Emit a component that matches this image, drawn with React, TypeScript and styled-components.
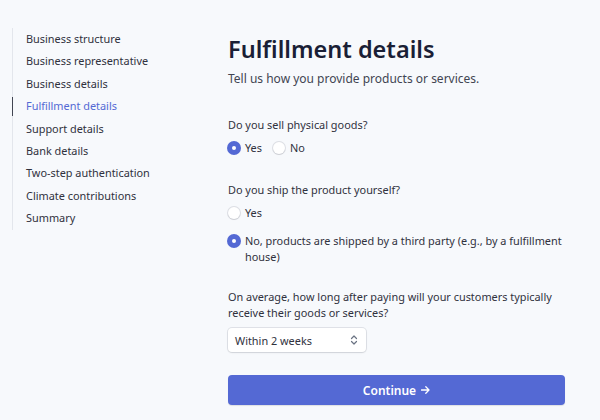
import React, { useState } from 'react'
import styled, { createGlobalStyle } from 'styled-components'

const GlobalStyle = createGlobalStyle`
  html, body {
    margin: 0;
    padding: 0;
    background: #f7f9fc;
  }
  body {
    font-family: "Noto Sans", "Open Sans", sans-serif;
    color: #30313d;
  }
`

const Page = styled.div`
  display: flex;
  width: 600px;
  height: 420px;
  overflow: hidden;
  background: #f7f9fc;
`

const SideNav = styled.nav`
  width: 228px;
  padding: 28px 0 0 12px;
  box-sizing: border-box;
`

const NavList = styled.ul`
  list-style: none;
  margin: 0;
  padding: 0;
  border-left: 1px solid #e3e6ec;
  width: 180px;
`

const NavItem = styled.li<{ $active?: boolean }>`
  position: relative;
  padding-left: 13px;
  height: 22.4px;
  line-height: 22.4px;
  font-size: 10.9px;
  color: ${(p) => (p.$active ? '#5469d4' : '#30313d')};

  &::before {
    content: '';
    display: ${(p) => (p.$active ? 'block' : 'none')};
    position: absolute;
    left: -1px;
    top: 2px;
    bottom: 2px;
    width: 1px;
    background: #414552;
  }
`

const Main = styled.main`
  width: 337px;
  padding-top: 32px;
`

const Title = styled.h1`
  margin: 0;
  font-size: 23.5px;
  font-weight: 600;
  color: #1a1f36;
  line-height: 34px;
`

const Subtitle = styled.p`
  margin: 4px 0 0;
  font-size: 12px;
  color: #414552;
  line-height: 18px;
`

const Question = styled.fieldset<{ $gap: number }>`
  border: 0;
  margin: 0;
  padding: 0;
  margin-top: ${(p) => p.$gap}px;
`

const Label = styled.div`
  font-size: 10.9px;
  line-height: 16px;
  color: #30313d;
`

const RadioRow = styled.div<{ $stack?: boolean }>`
  display: flex;
  flex-direction: ${(p) => (p.$stack ? 'column' : 'row')};
  gap: ${(p) => (p.$stack ? '12px' : '11px')};
  margin-top: 7px;
`

const RadioLabel = styled.label`
  display: flex;
  align-items: flex-start;
  gap: 5px;
  font-size: 10.9px;
  line-height: 16px;
  color: #30313d;
  cursor: pointer;
`

const Dot = styled.span<{ $on: boolean }>`
  flex: none;
  width: 12px;
  height: 12px;
  margin-top: 2px;
  border-radius: 50%;
  box-sizing: border-box;
  background: ${(p) => (p.$on ? '#5469d4' : '#ffffff')};
  box-shadow: ${(p) =>
    p.$on
      ? '0 0 0 1px #5469d4'
      : '0 0 0 1px rgba(60, 66, 87, 0.14), 0 1px 1px rgba(0, 0, 0, 0.08)'};
  display: flex;
  align-items: center;
  justify-content: center;

  &::after {
    content: '';
    width: 4px;
    height: 4px;
    border-radius: 50%;
    background: #ffffff;
    display: ${(p) => (p.$on ? 'block' : 'none')};
  }
`

const SelectBox = styled.div`
  margin-top: 7px;
  width: 138px;
  height: 24px;
  box-sizing: border-box;
  padding: 0 8px 0 7px;
  display: flex;
  align-items: center;
  justify-content: space-between;
  background: #ffffff;
  border-radius: 4px;
  box-shadow: 0 0 0 1px rgba(60, 66, 87, 0.12), 0 1px 2px rgba(0, 0, 0, 0.08);
  font-size: 10.9px;
  color: #30313d;
`

const ContinueButton = styled.button`
  margin-top: 23px;
  width: 337px;
  height: 30px;
  border: 0;
  border-radius: 4px;
  background: #5469d4;
  color: #ffffff;
  font-family: inherit;
  font-size: 12px;
  font-weight: 600;
  display: flex;
  align-items: center;
  justify-content: center;
  gap: 5px;
  box-shadow: 0 1px 1px rgba(0, 0, 0, 0.1);
`

type Option = { value: string; label: string }

const Radio = ({
  options,
  value,
  onChange,
  stack,
}: {
  options: Option[]
  value: string
  onChange: (v: string) => void
  stack?: boolean
}): JSX.Element => (
  <RadioRow $stack={stack}>
    {options.map((o) => (
      <RadioLabel key={o.value} onClick={() => onChange(o.value)}>
        <Dot $on={value === o.value} />
        <span>{o.label}</span>
      </RadioLabel>
    ))}
  </RadioRow>
)

const steps = [
  'Business structure',
  'Business representative',
  'Business details',
  'Fulfillment details',
  'Support details',
  'Bank details',
  'Two-step authentication',
  'Climate contributions',
  'Summary',
]

const App = (): JSX.Element => {
  const [physical, setPhysical] = useState('yes')
  const [ship, setShip] = useState('no')

  return (
    <>
      <GlobalStyle />
      <Page>
        <SideNav>
          <NavList>
            {steps.map((s) => (
              <NavItem key={s} $active={s === 'Fulfillment details'}>
                {s}
              </NavItem>
            ))}
          </NavList>
        </SideNav>

        <Main>
          <Title>Fulfillment details</Title>
          <Subtitle>Tell us how you provide products or services.</Subtitle>

          <Question $gap={29}>
            <Label>Do you sell physical goods?</Label>
            <Radio
              value={physical}
              onChange={setPhysical}
              options={[
                { value: 'yes', label: 'Yes' },
                { value: 'no', label: 'No' },
              ]}
            />
          </Question>

          <Question $gap={26}>
            <Label>Do you ship the product yourself?</Label>
            <Radio
              stack
              value={ship}
              onChange={setShip}
              options={[
                { value: 'yes', label: 'Yes' },
                {
                  value: 'no',
                  label:
                    'No, products are shipped by a third party (e.g., by a fulfillment house)',
                },
              ]}
            />
          </Question>

          <Question $gap={24}>
            <Label>
              On average, how long after paying will your customers typically
              receive their goods or services?
            </Label>
            <SelectBox>
              <span>Within 2 weeks</span>
              <svg width="8" height="10" viewBox="0 0 8 10" fill="none">
                <path
                  d="M1.5 3.5L4 1L6.5 3.5M1.5 6.5L4 9L6.5 6.5"
                  stroke="#6a7383"
                  strokeWidth="1.2"
                  strokeLinecap="round"
                  strokeLinejoin="round"
                />
              </svg>
            </SelectBox>
          </Question>

          <ContinueButton>
            Continue
            <svg width="9" height="8" viewBox="0 0 9 8" fill="none">
              <path
                d="M0.5 4H8M4.8 0.8L8 4L4.8 7.2"
                stroke="#ffffff"
                strokeWidth="1.3"
                strokeLinecap="round"
                strokeLinejoin="round"
              />
            </svg>
          </ContinueButton>
        </Main>
      </Page>
    </>
  )
}

export default App
